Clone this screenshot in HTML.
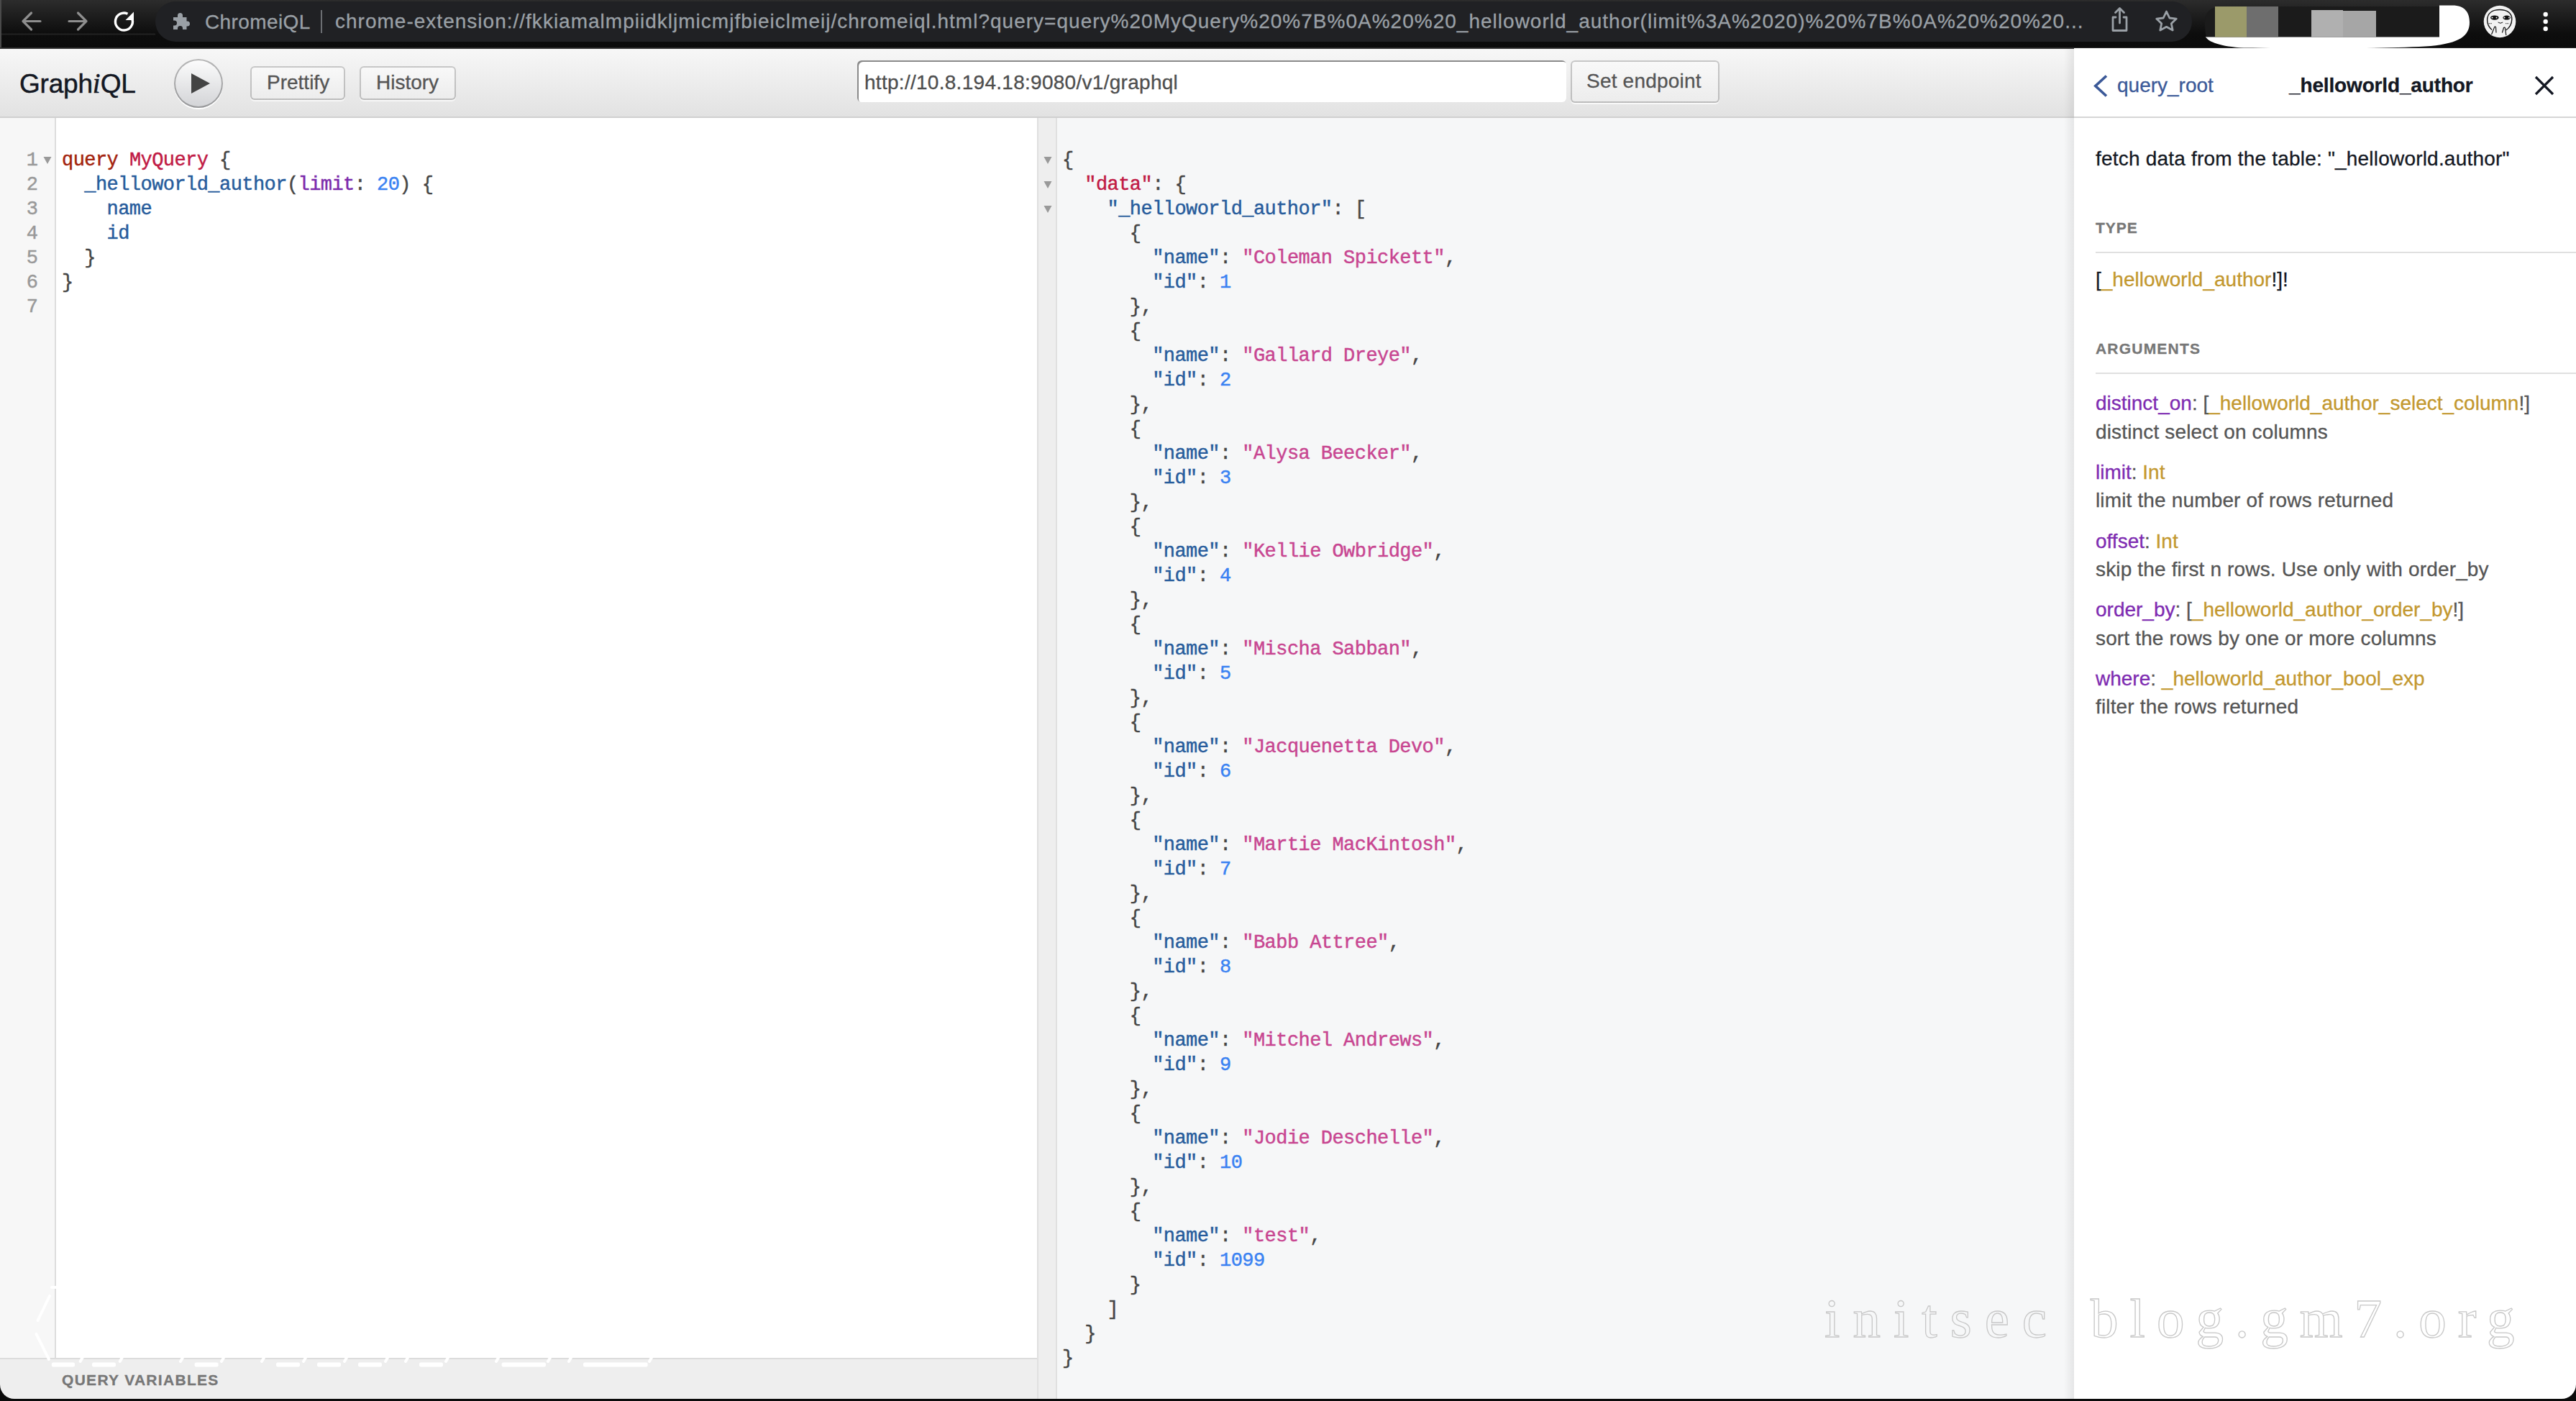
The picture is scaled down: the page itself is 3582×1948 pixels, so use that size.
<!DOCTYPE html>
<html><head><meta charset="utf-8">
<style>
*{box-sizing:border-box}
html,body{margin:0;padding:0;width:3582px;height:1948px;overflow:hidden;background:#0b0b0b;position:relative}
body{font-family:"Liberation Sans",sans-serif}
.a{position:absolute}
.s{font-family:"Liberation Sans",sans-serif;white-space:pre;line-height:1;-webkit-text-stroke-width:0.3px}
.m{font-family:"Liberation Mono",monospace;white-space:pre}
/* chrome bar */
#chrome{left:0;top:0;width:3582px;height:67px;background:linear-gradient(#2c2c2c,#0d0d0d 70%,#0b0b0b);}
#pill{left:216px;top:2px;width:2832px;height:56px;border-radius:28px;background:#202124}
/* toolbar */
#toolbar{left:0;top:67px;width:2884px;height:97px;background:linear-gradient(#f7f7f7,#e2e2e2);border-bottom:2px solid #d0d0d0;border-top:1px solid #3a3a3a}
.tbtn{height:47px;border-radius:6px;background:linear-gradient(#f9f9f9,#ececec);box-shadow:inset 0 0 0 2px rgba(0,0,0,.2),0 2px 0 rgba(255,255,255,.7);color:#555;font-size:28px}
/* editor */
#editor{left:0;top:164px;width:1442px;height:1724px;background:#fff}
#gutter{left:0;top:164px;width:78px;height:1724px;background:#f7f7f7;border-right:2px solid #ddd}
#vars{left:0;top:1888px;width:1442px;height:57px;background:#eee;border-top:2px solid #dcdcdc;border-bottom-left-radius:20px}
/* results */
#results{left:1442px;top:164px;width:1442px;height:1781px;background:#f6f7f8;border-left:2px solid #e0e0e0}
#rgutter{left:1444px;top:164px;width:26px;height:1781px;background:#eee;border-right:2px solid #e0e0e0}
/* docs */
#docs{left:2884px;top:67px;width:698px;height:1878px;background:#fff;border-bottom-right-radius:20px}
#docshadow{left:2870px;top:67px;width:14px;height:1878px;background:linear-gradient(90deg,rgba(0,0,0,0),rgba(0,0,0,.07))}
.code{font-size:27px;letter-spacing:-0.56px;line-height:34px;-webkit-text-stroke-width:0.45px}
.kw{color:#a3220d}.df{color:#c11a45}.pr{color:#275c9c}.at{color:#7b2aab}.nu{color:#3a82f2}.pu{color:#464646}.st{color:#c84691}
.ln{color:#999}
.tn{color:#c3982f}.an{color:#7e2bb1}
</style></head><body>
<div id="chrome" class="a"></div>
<div id="pill" class="a"></div>
<svg class="a" style="left:0;top:0" width="3582" height="67">
 <line x1="0" y1="47.5" x2="216" y2="47.5" stroke="#222" stroke-width="2"/>
 <rect x="0" y="0" width="2" height="67" fill="#4a4a4a"/>
 <line x1="0" y1="66.5" x2="3582" y2="66.5" stroke="#2e2e2e" stroke-width="1"/>
 <g stroke="#8e8e8e" stroke-width="3.2" fill="none" stroke-linecap="round" stroke-linejoin="round">
  <path d="M56 29.5H32.5M43.5 18L32 29.5L43.5 41"/>
  <path d="M96 29.5H119.5M108.5 18L120 29.5L108.5 41"/>
 </g>
 <path d="M184 27A12 12 0 1 1 177.5 19.2" stroke="#fff" stroke-width="3.4" fill="none"/>
 <path d="M186 16.5V28H174.5Z" fill="#fff"/>
 <path d="M247 21.5a3.5 3.5 0 0 1 7 0V24h5.5v5.5h1a3.5 3.5 0 0 1 0 7h-1V41h-5.5v-1.5a3.5 3.5 0 0 0-7 0V41H241V35.5h1.5a3.5 3.5 0 0 0 0-7H241V24h6Z" fill="#9aa0a6"/>
 <rect x="446" y="14" width="2" height="32" fill="#6b6e72"/>
 <g fill="none" stroke="#9aa0a6" stroke-width="2.8" stroke-linecap="round" stroke-linejoin="round">
  <path d="M2941.5 17.5L2947.5 11.5L2953.5 17.5M2947.5 12V32"/>
  <path d="M2942 24H2938V42.5H2957V24H2953"/>
  <path d="M3012.5 16L3016.8 25L3026.3 26.1L3019.3 32.7L3021.2 42L3012.5 37.3L3003.8 42L3005.7 32.7L2998.7 26.1L3008.2 25Z"/>
 </g>
 <path d="M3392 7.5H3410C3428 7.5 3434 18 3434 31C3434 50 3420 60 3380 64C3320 68 3200 67.5 3120 66.5C3088 65 3070 58 3067 51H3392Z" fill="#fff"/>
 <path d="M3066 30C3066 16 3075 9 3090 9L3392 9V51.5H3068C3066 45 3066 38 3066 30Z" fill="#1b1b1b"/>
 <rect x="3080" y="9" width="44" height="42.5" fill="#9b9a6a"/>
 <rect x="3124" y="9" width="44" height="42.5" fill="#6e6e6e"/>
 <rect x="3214" y="14" width="44" height="37.5" fill="#b0b0b0"/>
 <rect x="3258" y="15" width="46" height="36.5" fill="#a6a6a6"/>
 <circle cx="3476" cy="30" r="22.3" fill="#f2f2f2"/>
 <path d="M3465 41.5C3460 37 3458.6 33 3458.6 28C3458.6 18 3466 13.5 3476 13.5C3486 13.5 3493 18 3492.8 27C3492.6 35 3489 39 3484.6 42" fill="none" stroke="#111" stroke-width="1.4"/>
 <ellipse cx="3468.8" cy="24.6" rx="5.8" ry="3.2" fill="#111"/>
 <ellipse cx="3485.6" cy="24.6" rx="5.2" ry="3" fill="#111"/>
 <circle cx="3465.5" cy="24.5" r="1" fill="#fff"/><circle cx="3471.5" cy="24.5" r="0.9" fill="#fff"/>
 <circle cx="3482.5" cy="24.5" r="1" fill="#fff"/><circle cx="3489" cy="24.5" r="0.9" fill="#fff"/>
 <path d="M3473.6 31Q3477 33.5 3480.2 31" stroke="#111" stroke-width="1" fill="none"/>
 <path d="M3460.5 32.6h4.5M3484 32.6h4.5" stroke="#555" stroke-width="1.2" stroke-dasharray="1.2 0.6"/>
 <path d="M3464.5 48L3468.8 37.3Q3470 36.5 3470.5 38L3471 45.5M3479.4 45.5L3481.5 38.5Q3482.5 37.5 3483.5 39L3484.8 49" fill="none" stroke="#111" stroke-width="1.2"/>
 <circle cx="3539.7" cy="20" r="3.2" fill="#fff"/><circle cx="3539.7" cy="30" r="3.2" fill="#fff"/><circle cx="3539.7" cy="40" r="3.2" fill="#fff"/>
</svg>
<div class="a s" style="left:285px;top:16.5px;font-size:28px;color:#9aa0a6;letter-spacing:0.4px">ChromeiQL</div>
<div class="a s" style="left:466px;top:16px;font-size:28px;color:#9aa0a6;letter-spacing:1.01px">chrome-extension://fkkiamalmpiidkljmicmjfbieiclmeij/chromeiql.html?query=query%20MyQuery%20%7B%0A%20%20_helloworld_author(limit%3A%2020)%20%7B%0A%20%20%20...</div>

<div id="toolbar" class="a"></div>
<div class="a s" style="left:27px;top:96px;font-size:37px;color:#141823;letter-spacing:-0.2px;-webkit-text-stroke:0.5px #141823">Graph<i style="font-family:'Liberation Serif';font-size:39px;letter-spacing:0">i</i>QL</div>
<div class="a" style="left:242px;top:82px;width:68px;height:68px;border-radius:34px;background:linear-gradient(#fdfdfd,#d2d3d6);box-shadow:inset 0 0 0 2px rgba(0,0,0,.28),0 2px 0 #fff"></div>
<svg class="a" style="left:0;top:0" width="400" height="160"><path d="M266 102L292 116L266 130Z" fill="#444"/></svg>
<div class="a tbtn" style="left:348px;top:92px;width:132px"></div>
<div class="a s" style="left:371px;top:101px;font-size:28px;color:#555">Prettify</div>
<div class="a tbtn" style="left:500px;top:92px;width:134px"></div>
<div class="a s" style="left:523px;top:101px;font-size:28px;color:#555">History</div>
<div class="a" style="left:1192px;top:84px;width:986px;height:58px;border-radius:6px;background:#fff;box-shadow:inset 2px 2px 0 #8a8a8a"></div>
<div class="a s" style="left:1202px;top:101px;font-size:28px;color:#4e4e4e;letter-spacing:0.28px">http://10.8.194.18:9080/v1/graphql</div>
<div class="a tbtn" style="left:2184px;top:84px;width:207px;height:59px"></div>
<div class="a s" style="left:2206px;top:99px;font-size:28px;color:#555;letter-spacing:0.2px">Set endpoint</div>
<div id="editor" class="a"></div>
<div id="gutter" class="a"></div>
<div class="a m code ln" style="left:0;top:206px;width:53px;text-align:right;letter-spacing:0">1
2
3
4
5
6
7</div>
<svg class="a" style="left:0;top:0" width="80" height="240"><path d="M60.5 218L71.5 218L66 228Z" fill="#999"/></svg>
<div class="a m code" style="left:86px;top:206px"><span class="kw">query</span> <span class="df">MyQuery</span> <span class="pu">{</span>
  <span class="pr">_helloworld_author</span><span class="pu">(</span><span class="at">limit</span><span class="pu">:</span> <span class="nu">20</span><span class="pu">)</span> <span class="pu">{</span>
    <span class="pr">name</span>
    <span class="pr">id</span>
  <span class="pu">}</span>
<span class="pu">}</span>
</div>
<div id="vars" class="a"></div>
<svg class="a" style="left:0;top:1780px" width="1000" height="130"><g fill="#fff"><rect x="71.8" y="114.5" width="32.2" height="6" rx="2"/><rect x="128.0" y="114.5" width="33.0" height="6" rx="2"/><rect x="270.6" y="114.5" width="33.0" height="6" rx="2"/><rect x="384.0" y="114.5" width="33.0" height="6" rx="2"/><rect x="441.0" y="114.5" width="33.0" height="6" rx="2"/><rect x="498.0" y="114.5" width="33.0" height="6" rx="2"/><rect x="583.0" y="114.5" width="33.0" height="6" rx="2"/><rect x="697.6" y="114.5" width="61.4" height="6" rx="2"/><rect x="811.0" y="114.5" width="89.6" height="6" rx="2"/></g><g stroke="#fff" stroke-width="4" stroke-linecap="round" fill="none"><path d="M115.6 106L111.6 113"/><path d="M170.7 106L166.7 113"/><path d="M255.0 106L251.0 113"/><path d="M312.0 106L308.0 113"/><path d="M368.0 106L364.0 113"/><path d="M426.0 106L422.0 113"/><path d="M483.0 106L479.0 113"/><path d="M540.0 106L536.0 113"/><path d="M568.0 106L564.0 113"/><path d="M624.0 106L620.0 113"/><path d="M694.0 106L690.0 113"/><path d="M766.0 106L762.0 113"/><path d="M795.0 106L791.0 113"/><path d="M907.0 106L903.0 113"/><path d="M69 22L52.5 56M50.5 75L68 110M72 10H78"/></g></svg>
<div class="a s" style="left:86px;top:1908px;font-size:21px;font-weight:bold;color:#777;letter-spacing:1.3px">QUERY VARIABLES</div>
<div id="results" class="a"></div>
<div id="rgutter" class="a"></div>
<svg class="a" style="left:1440px;top:200px" width="30" height="120"><g fill="#999"><path d="M11.5 18L22.5 18L17 28Z"/><path d="M11.5 52L22.5 52L17 62Z"/><path d="M11.5 86L22.5 86L17 96Z"/></g></svg>
<div class="a m code" style="left:1477px;top:206px"><span class="pu">{</span>
  <span class="df">"data"</span><span class="pu">:</span> <span class="pu">{</span>
    <span class="pr">"_helloworld_author"</span><span class="pu">:</span> <span class="pu">[</span>
      <span class="pu">{</span>
        <span class="pr">"name"</span><span class="pu">:</span> <span class="st">"Coleman Spickett"</span><span class="pu">,</span>
        <span class="pr">"id"</span><span class="pu">:</span> <span class="nu">1</span>
      <span class="pu">}</span><span class="pu">,</span>
      <span class="pu">{</span>
        <span class="pr">"name"</span><span class="pu">:</span> <span class="st">"Gallard Dreye"</span><span class="pu">,</span>
        <span class="pr">"id"</span><span class="pu">:</span> <span class="nu">2</span>
      <span class="pu">}</span><span class="pu">,</span>
      <span class="pu">{</span>
        <span class="pr">"name"</span><span class="pu">:</span> <span class="st">"Alysa Beecker"</span><span class="pu">,</span>
        <span class="pr">"id"</span><span class="pu">:</span> <span class="nu">3</span>
      <span class="pu">}</span><span class="pu">,</span>
      <span class="pu">{</span>
        <span class="pr">"name"</span><span class="pu">:</span> <span class="st">"Kellie Owbridge"</span><span class="pu">,</span>
        <span class="pr">"id"</span><span class="pu">:</span> <span class="nu">4</span>
      <span class="pu">}</span><span class="pu">,</span>
      <span class="pu">{</span>
        <span class="pr">"name"</span><span class="pu">:</span> <span class="st">"Mischa Sabban"</span><span class="pu">,</span>
        <span class="pr">"id"</span><span class="pu">:</span> <span class="nu">5</span>
      <span class="pu">}</span><span class="pu">,</span>
      <span class="pu">{</span>
        <span class="pr">"name"</span><span class="pu">:</span> <span class="st">"Jacquenetta Devo"</span><span class="pu">,</span>
        <span class="pr">"id"</span><span class="pu">:</span> <span class="nu">6</span>
      <span class="pu">}</span><span class="pu">,</span>
      <span class="pu">{</span>
        <span class="pr">"name"</span><span class="pu">:</span> <span class="st">"Martie MacKintosh"</span><span class="pu">,</span>
        <span class="pr">"id"</span><span class="pu">:</span> <span class="nu">7</span>
      <span class="pu">}</span><span class="pu">,</span>
      <span class="pu">{</span>
        <span class="pr">"name"</span><span class="pu">:</span> <span class="st">"Babb Attree"</span><span class="pu">,</span>
        <span class="pr">"id"</span><span class="pu">:</span> <span class="nu">8</span>
      <span class="pu">}</span><span class="pu">,</span>
      <span class="pu">{</span>
        <span class="pr">"name"</span><span class="pu">:</span> <span class="st">"Mitchel Andrews"</span><span class="pu">,</span>
        <span class="pr">"id"</span><span class="pu">:</span> <span class="nu">9</span>
      <span class="pu">}</span><span class="pu">,</span>
      <span class="pu">{</span>
        <span class="pr">"name"</span><span class="pu">:</span> <span class="st">"Jodie Deschelle"</span><span class="pu">,</span>
        <span class="pr">"id"</span><span class="pu">:</span> <span class="nu">10</span>
      <span class="pu">}</span><span class="pu">,</span>
      <span class="pu">{</span>
        <span class="pr">"name"</span><span class="pu">:</span> <span class="st">"test"</span><span class="pu">,</span>
        <span class="pr">"id"</span><span class="pu">:</span> <span class="nu">1099</span>
      <span class="pu">}</span>
    <span class="pu">]</span>
  <span class="pu">}</span>
<span class="pu">}</span></div>
<div id="docshadow" class="a"></div>
<div id="docs" class="a"></div>
<div class="a" style="left:2884px;top:162px;width:698px;height:2px;background:#d6d6d6"></div>
<svg class="a" style="left:2884px;top:67px" width="698" height="95">
 <path d="M45 38.5L29.8 52.5L45 66.5" stroke="#3B5998" stroke-width="3.7" fill="none"/>
 <path d="M642 40L666 64M666 40L642 64" stroke="#141823" stroke-width="3.2" fill="none"/>
</svg>
<div class="a s" style="left:2944px;top:105.2px;font-size:28px;color:#3B5998">query_root</div>
<div class="a s" style="left:3183px;top:104.6px;font-size:28px;font-weight:bold;color:#141823;letter-spacing:-0.15px">_helloworld_author</div>
<div class="a s" style="left:2914px;top:206.6px;font-size:28px;color:#141823;letter-spacing:0.2px">fetch data from the table: "_helloworld.author"</div>
<div class="a s" style="left:2914px;top:306.4px;font-size:21px;font-weight:bold;color:#777;letter-spacing:1px">TYPE</div>
<div class="a" style="left:2914px;top:349.5px;width:668px;height:2px;background:#e0e0e0"></div>
<div class="a s" style="left:2914px;top:375px;font-size:28px;color:#141823">[<span class="tn">_helloworld_author</span>!]!</div>
<div class="a s" style="left:2914px;top:474.2px;font-size:21px;font-weight:bold;color:#777;letter-spacing:1.2px">ARGUMENTS</div>
<div class="a" style="left:2914px;top:517.5px;width:668px;height:2px;background:#e0e0e0"></div>
<div class="a s" style="left:2914px;top:547.3px;font-size:28px;color:#555"><span class="an">distinct_on</span>: [<span class="tn">_helloworld_author_select_column</span>!]</div>
<div class="a s" style="left:2914px;top:586.8px;font-size:28px;color:#555;letter-spacing:0.15px">distinct select on columns</div>
<div class="a s" style="left:2914px;top:642.9px;font-size:28px;color:#555"><span class="an">limit</span>: <span class="tn">Int</span></div>
<div class="a s" style="left:2914px;top:682.4px;font-size:28px;color:#555;letter-spacing:0.15px">limit the number of rows returned</div>
<div class="a s" style="left:2914px;top:738.5px;font-size:28px;color:#555"><span class="an">offset</span>: <span class="tn">Int</span></div>
<div class="a s" style="left:2914px;top:778.0px;font-size:28px;color:#555;letter-spacing:0.15px">skip the first n rows. Use only with order_by</div>
<div class="a s" style="left:2914px;top:834.1px;font-size:28px;color:#555"><span class="an">order_by</span>: [<span class="tn">_helloworld_author_order_by</span>!]</div>
<div class="a s" style="left:2914px;top:873.6px;font-size:28px;color:#555;letter-spacing:0.15px">sort the rows by one or more columns</div>
<div class="a s" style="left:2914px;top:929.7px;font-size:28px;color:#555"><span class="an">where</span>: <span class="tn">_helloworld_author_bool_exp</span></div>
<div class="a s" style="left:2914px;top:969.2px;font-size:28px;color:#555;letter-spacing:0.15px">filter the rows returned</div>

<div class="a" style="left:2537px;top:1783px;font-family:'Liberation Serif';font-size:77px;line-height:100px;color:transparent;-webkit-text-stroke:1.3px #c8c8c8;white-space:pre;letter-spacing:18px">initsec</div>
<div class="a" style="left:2907px;top:1783px;font-family:'Liberation Serif';font-size:77px;line-height:100px;color:transparent;-webkit-text-stroke:1.3px #c8c8c8;white-space:pre;letter-spacing:16px">blog.gm7.org</div>
</body></html>
